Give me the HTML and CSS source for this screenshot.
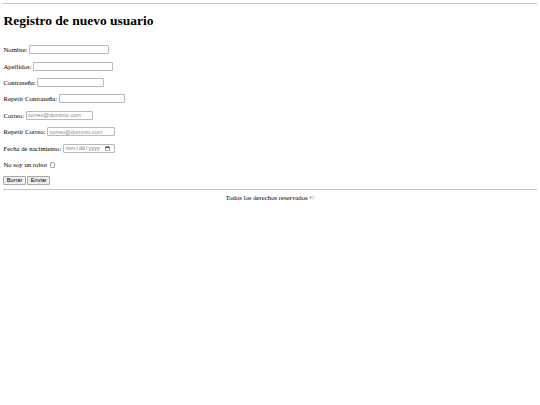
FILE: index.html
```html
<!DOCTYPE html>
<html lang="es">
<head>
<meta charset="utf-8">
<title>Registro de nuevo usuario</title>
<link rel="stylesheet" href="styles.css">
</head>
<body>
<header class="page-header">
  <hr class="rule">
  <h1 class="title">Registro de nuevo usuario</h1>
</header>
<form class="form">
  <p class="row"><label class="label" for="nombre">Nombre:</label><input class="field field-text" type="text" id="nombre"></p>
  <p class="row"><label class="label" for="apellidos">Apellidos:</label><input class="field field-text" type="text" id="apellidos"></p>
  <p class="row"><label class="label" for="pass">Contraseña:</label><input class="field field-pass" type="password" id="pass"></p>
  <p class="row"><label class="label" for="pass2">Repetir Contraseña:</label><input class="field field-pass" type="password" id="pass2"></p>
  <p class="row"><label class="label" for="correo">Correo:</label><input class="field field-mail" type="email" id="correo" placeholder="correo@dominio.com"></p>
  <p class="row"><label class="label" for="correo2">Repetir Correo:</label><input class="field field-mail" type="email" id="correo2" placeholder="correo@dominio.com"></p>
  <p class="row"><label class="label" for="fecha">Fecha de nacimiento:</label><input class="field field-date" type="date" id="fecha"></p>
  <p class="row"><label class="label" for="robot">No soy un robot</label><input class="check" type="checkbox" id="robot"></p>
  <p class="row row-buttons"><button class="btn" type="reset">Borrar</button><button class="btn" type="submit">Enviar</button></p>
</form>
<hr class="rule rule-bottom">
<footer class="footer">Todos los derechos reservados ©</footer>
</body>
</html>
```

FILE: styles.css
```css
html {
  background: #ffffff;
}

body {
  margin: 0 3.4px;
  padding-top: 3px;
  font-family: "Liberation Serif", "Times New Roman", serif;
  font-size: 6.75px;
  color: #000000;
}

.rule {
  margin: 0 0 3.4px;
  border: 0;
  height: 1px;
  background: #c4c4c4;
}

.title {
  margin: 9.3px 0 15.8px;
  font-size: 13.5px;
  font-weight: bold;
  line-height: 15.5px;
}

.form {
  margin: 0;
}

.row {
  display: flex;
  align-items: center;
  gap: 1.7px;
  margin: 6.6px 0;
  height: 9.9px;
}

.row-buttons {
  height: 8.4px;
  margin-bottom: 4px;
}

.label {
  line-height: normal;
}

.field {
  box-sizing: border-box;
  height: 9px;
  margin: 0;
  padding: 0 1px;
  border: 1px solid #b9b9b9;
  border-radius: 1px;
  font-family: "Liberation Sans", Arial, sans-serif;
  font-size: 5.6px;
  color: #000000;
  background: #ffffff;
}

.field::placeholder {
  color: #8a8a8a;
}

.field-text {
  width: 79.5px;
}

.field-pass {
  width: 66.5px;
}

.field-mail {
  width: 67.5px;
}

.field-date {
  width: 52px;
  color: #7a7a7a;
}

.check {
  appearance: none;
  box-sizing: border-box;
  width: 5.4px;
  height: 5.4px;
  margin: 0 0 0 0.8px;
  border: 1px solid #a8a8a8;
  border-radius: 1px;
  background: #ffffff;
}

.btn {
  box-sizing: border-box;
  height: 8.4px;
  margin: 0;
  padding: 0 2.4px;
  border: 1px solid #a9a9a9;
  border-radius: 1px;
  background: #efefef;
  font-family: "Liberation Sans", Arial, sans-serif;
  font-size: 5.6px;
  line-height: 1;
  color: #000000;
}

.rule-bottom {
  margin-top: 0;
  margin-bottom: 4.4px;
}

.footer {
  text-align: center;
  line-height: normal;
}
```
